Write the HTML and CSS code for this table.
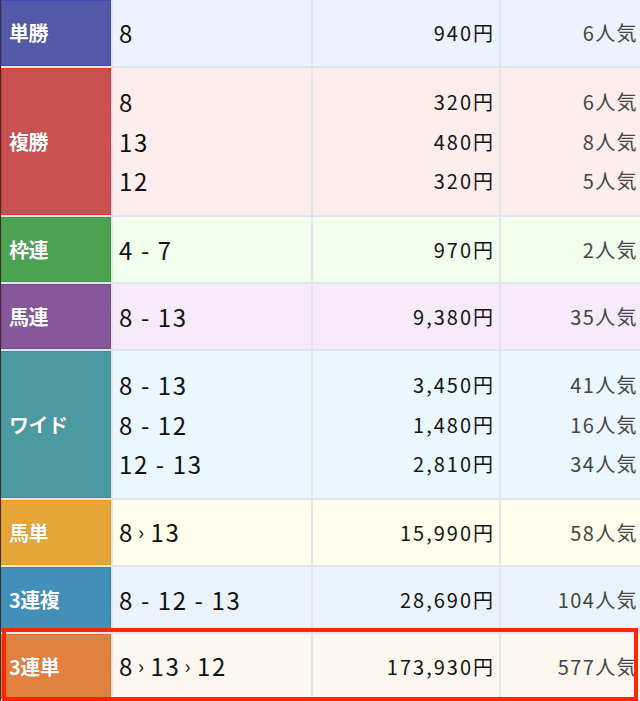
FILE: index.html
```html
<!DOCTYPE html>
<html lang="ja">
<head>
  <meta charset="UTF-8">
  <title>払戻金</title>
  <link rel="stylesheet" href="styles.css">
</head>
<body>
  <div class="payout-wrap">
    <table class="payout">
      <colgroup>
        <col class="c-type">
        <col class="c-num">
        <col class="c-yen">
        <col class="c-pop">
      </colgroup>
      <tr class="tansho">
        <th>単勝</th>
        <td class="num">8</td>
        <td class="yen">940円</td>
        <td class="pop">6人気</td>
      </tr>
      <tr class="fukusho multi">
        <th>複勝</th>
        <td class="num">8<br>13<br>12</td>
        <td class="yen">320円<br>480円<br>320円</td>
        <td class="pop">6人気<br>8人気<br>5人気</td>
      </tr>
      <tr class="wakuren">
        <th>枠連</th>
        <td class="num">4 - 7</td>
        <td class="yen">970円</td>
        <td class="pop">2人気</td>
      </tr>
      <tr class="umaren">
        <th>馬連</th>
        <td class="num">8 - 13</td>
        <td class="yen">9,380円</td>
        <td class="pop">35人気</td>
      </tr>
      <tr class="wide multi">
        <th>ワイド</th>
        <td class="num">8 - 13<br>8 - 12<br>12 - 13</td>
        <td class="yen">3,450円<br>1,480円<br>2,810円</td>
        <td class="pop">41人気<br>16人気<br>34人気</td>
      </tr>
      <tr class="umatan">
        <th>馬単</th>
        <td class="num">8<span class="arrow">›</span>13</td>
        <td class="yen">15,990円</td>
        <td class="pop">58人気</td>
      </tr>
      <tr class="sanfuku">
        <th>3連複</th>
        <td class="num">8 - 12 - 13</td>
        <td class="yen">28,690円</td>
        <td class="pop">104人気</td>
      </tr>
      <tr class="santan">
        <th>3連単</th>
        <td class="num">8<span class="arrow">›</span>13<span class="arrow">›</span>12</td>
        <td class="yen">173,930円</td>
        <td class="pop">577人気</td>
      </tr>
    </table>
    <!-- highlight box drawn over the last row -->
    <div class="mark"></div>
  </div>
</body>
</html>
```

FILE: styles.css
```css
html, body {
  margin: 0;
  padding: 0;
}

body {
  background: #e3e5ed;
  overflow: hidden;
  font-family: "Noto Sans CJK JP", "Noto Sans", sans-serif;
}

.payout-wrap {
  position: relative;
  border-left: 1px solid #3b302c;
  height: 701px;
  overflow: hidden;
}

/* Table */
.payout {
  border-collapse: separate;
  border-spacing: 2px;
  table-layout: fixed;
  width: 646px;
  margin: -2px 0 0 -2px;
  background: #e3e5ed;
}

.c-type { width: 110px; }
.c-num { width: 198px; }
.c-yen { width: 186px; }
.c-pop { width: 142px; }

.payout th,
.payout td {
  box-sizing: border-box;
  height: 65px;
  padding: 0;
  vertical-align: middle;
  line-height: 40px;
}

.payout tr.multi th,
.payout tr.multi td {
  height: 147px;
  line-height: 39.5px;
}

.payout tr.tansho th,
.payout tr.tansho td {
  height: 66px;
}

.payout th {
  text-align: left;
  padding-left: 7px;
  color: #fff;
  font-size: 20px;
  font-weight: bold;
  letter-spacing: -0.5px;
  border: 1px solid transparent;
  text-shadow: 0 0 1px rgba(0, 0, 0, 0.3);
}

.num {
  padding-left: 6px !important;
  font-size: 24px;
  color: #111;
  letter-spacing: 1.6px;
  white-space: pre;
}

.num .arrow {
  font-size: 20px;
  margin: 0 5px 0 4px;
  position: relative;
  top: -2px;
}

.yen {
  text-align: right;
  padding-right: 4px !important;
  font-size: 20px;
  color: #151515;
  letter-spacing: 2px;
}

.pop {
  text-align: right;
  padding-right: 5px !important;
  font-size: 20px;
  color: #454545;
  letter-spacing: 1.4px;
}

/* Bet types */
.tansho th { background: #5259a9; border-color: #3f4bb2; }
.tansho td { background: #ecf3fe; }

.fukusho th { background: #c95152; border-color: #d23636; }
.fukusho td { background: #feeded; }

.wakuren th { background: #4ea352; border-color: #3c9a40; }
.wakuren td { background: #f1fded; }

.umaren th { background: #86579a; border-color: #7a4692; }
.umaren td { background: #f7eafb; }

.wide th { background: #4b9aa1; border-color: #3e9298; }
.wide td { background: #eaf7fe; }

.umatan th { background: #e6a637; border-color: #e39c20; }
.umatan td { background: #fffdec; }

.sanfuku th { background: #4290ba; border-color: #3788b6; }
.sanfuku td { background: #eaf3fc; }

.santan th { background: #e28040; border-color: #e2702a; }
.santan td { background: #fbf6ef; }

/* Red highlight */
.mark {
  position: absolute;
  left: 1px;
  top: 628px;
  width: 636px;
  height: 73px;
  border: 4px solid #ff2600;
  box-sizing: border-box;
}
```
